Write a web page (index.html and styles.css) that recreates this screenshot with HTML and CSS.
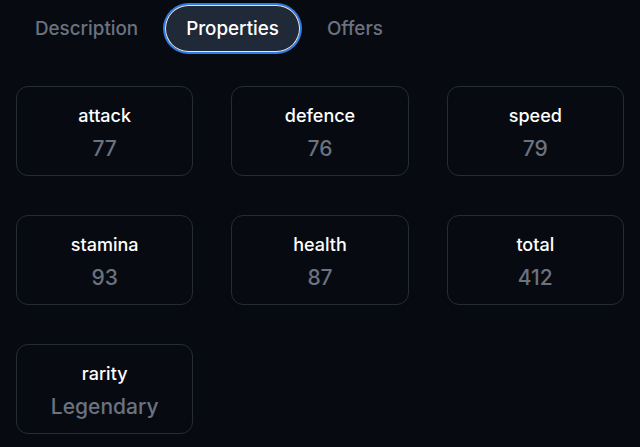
FILE: index.html
```html
<!DOCTYPE html>
<html>
<head>
<meta charset="utf-8">
<link rel="stylesheet" href="styles.css">
</head>
<body>
<div class="page">
  <nav class="tabs">
    <button class="tab">Description</button>
    <button class="tab active">Properties</button>
    <button class="tab">Offers</button>
  </nav>
  <div class="grid">
    <div class="card"><div class="label">attack</div><div class="value">77</div></div>
    <div class="card"><div class="label">defence</div><div class="value">76</div></div>
    <div class="card"><div class="label">speed</div><div class="value">79</div></div>
    <div class="card"><div class="label">stamina</div><div class="value">93</div></div>
    <div class="card"><div class="label">health</div><div class="value">87</div></div>
    <div class="card"><div class="label">total</div><div class="value">412</div></div>
    <div class="card"><div class="label">rarity</div><div class="value">Legendary</div></div>
  </div>
</div>
</body>
</html>
```
FILE: styles.css
```css
html, body {
  margin: 0;
  padding: 0;
  background: #070b11;
  font-family: Inter, "Noto Sans", sans-serif;
}
.page {
  padding: 5px 16px 0 16px;
}
.tabs {
  display: flex;
  align-items: center;
  gap: 4px;
  margin-left: -2px;
}
.tab {
  font-family: inherit;
  font-size: 18.8px;
  font-weight: 500;
  color: #6b7280;
  background: transparent;
  border: none;
  height: 47px;
  padding: 0 21px;
  border-radius: 24px;
  cursor: pointer;
}
.tab.active {
  color: #ffffff;
  background: #1f2937;
  box-shadow: inset 0 0 0 1px #e5e7eb, 0 0 0 2px #2f7be6;
  margin: 0 2px;
}
.grid {
  margin-top: 34px;
  display: grid;
  grid-template-columns: repeat(3, 1fr);
  column-gap: 38px;
  row-gap: 39px;
}
.card {
  height: 90px;
  box-sizing: border-box;
  border: 1px solid #262c36;
  border-radius: 12px;
  display: flex;
  flex-direction: column;
  align-items: center;
  justify-content: center;
  gap: 10px;
  padding-top: 4px;
}
.label {
  color: #ffffff;
  font-size: 18px;
  font-weight: 500;
}
.value {
  color: #6b7280;
  font-size: 21px;
  font-weight: 500;
}
```
